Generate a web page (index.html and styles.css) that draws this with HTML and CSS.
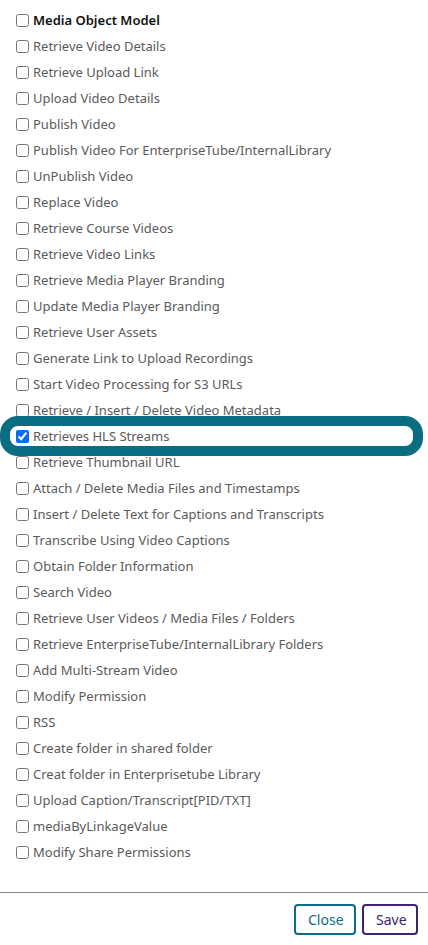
FILE: index.html
```html
<!DOCTYPE html>
<html lang="en">
<head>
    <meta charset="UTF-8">
    <meta name="viewport" content="width=device-width, initial-scale=1.0">
    <title>Media Object Model Permissions</title>
    <link rel="stylesheet" href="styles.css">
</head>
<body>
    <div class="perm-list">
        <label class="perm-row perm-head"><input type="checkbox"> Media Object Model</label>
        <label class="perm-row"><input type="checkbox"> Retrieve Video Details</label>
        <label class="perm-row"><input type="checkbox"> Retrieve Upload Link</label>
        <label class="perm-row"><input type="checkbox"> Upload Video Details</label>
        <label class="perm-row"><input type="checkbox"> Publish Video</label>
        <label class="perm-row"><input type="checkbox"> Publish Video For EnterpriseTube/InternalLibrary</label>
        <label class="perm-row"><input type="checkbox"> UnPublish Video</label>
        <label class="perm-row"><input type="checkbox"> Replace Video</label>
        <label class="perm-row"><input type="checkbox"> Retrieve Course Videos</label>
        <label class="perm-row"><input type="checkbox"> Retrieve Video Links</label>
        <label class="perm-row"><input type="checkbox"> Retrieve Media Player Branding</label>
        <label class="perm-row"><input type="checkbox"> Update Media Player Branding</label>
        <label class="perm-row"><input type="checkbox"> Retrieve User Assets</label>
        <label class="perm-row"><input type="checkbox"> Generate Link to Upload Recordings</label>
        <label class="perm-row"><input type="checkbox"> Start Video Processing for S3 URLs</label>
        <label class="perm-row"><input type="checkbox"> Retrieve / Insert / Delete Video Metadata</label>
        <label class="perm-row highlighted"><input type="checkbox" checked> Retrieves HLS Streams</label>
        <label class="perm-row"><input type="checkbox"> Retrieve Thumbnail URL</label>
        <label class="perm-row"><input type="checkbox"> Attach / Delete Media Files and Timestamps</label>
        <label class="perm-row"><input type="checkbox"> Insert / Delete Text for Captions and Transcripts</label>
        <label class="perm-row"><input type="checkbox"> Transcribe Using Video Captions</label>
        <label class="perm-row"><input type="checkbox"> Obtain Folder Information</label>
        <label class="perm-row"><input type="checkbox"> Search Video</label>
        <label class="perm-row"><input type="checkbox"> Retrieve User Videos / Media Files / Folders</label>
        <label class="perm-row"><input type="checkbox"> Retrieve EnterpriseTube/InternalLibrary Folders</label>
        <label class="perm-row"><input type="checkbox"> Add Multi-Stream Video</label>
        <label class="perm-row"><input type="checkbox"> Modify Permission</label>
        <label class="perm-row"><input type="checkbox"> RSS</label>
        <label class="perm-row"><input type="checkbox"> Create folder in shared folder</label>
        <label class="perm-row"><input type="checkbox"> Creat folder in Enterprisetube Library</label>
        <label class="perm-row"><input type="checkbox"> Upload Caption/Transcript[PID/TXT]</label>
        <label class="perm-row"><input type="checkbox"> mediaByLinkageValue</label>
        <label class="perm-row"><input type="checkbox"> Modify Share Permissions</label>
    </div>

    <!-- Footer buttons -->
    <div class="modal-footer">
        <button class="btn btn-close">Close</button>
        <button class="btn btn-save">Save</button>
    </div>
</body>
</html>
```

FILE: styles.css
```css
body {
    margin: 0;
    font-family: 'Noto Sans', sans-serif;
    background-color: #ffffff;
    color: #5a5a5a;
}
.perm-list {
    padding-top: 7px;
    height: 892px;
    box-sizing: border-box;
}
.perm-row {
    position: relative;
    display: flex;
    align-items: center;
    gap: 4px;
    height: 26px;
    padding-left: 16px;
    font-size: 13px;
    white-space: nowrap;
}
.perm-row input {
    width: 13px;
    height: 13px;
    margin: 0;
    accent-color: #0b6cf5;
}
.perm-head {
    color: #111;
    font-weight: 600;
}
.highlighted::before {
    content: "";
    position: absolute;
    left: 0;
    right: 5px;
    top: -7px;
    bottom: -7px;
    border: 10px solid #0b6d82;
    border-radius: 18px;
    pointer-events: none;
    z-index: 1;
}
.modal-footer {
    border-top: 1px solid #8a8a8a;
    display: flex;
    justify-content: flex-end;
    gap: 6px;
    padding: 11px 10px 0 0;
}
.btn {
    height: 31px;
    padding: 0 12px;
    background-color: #ffffff;
    border-radius: 4px;
    font-family: 'Noto Sans', sans-serif;
    font-size: 14px;
    cursor: pointer;
}
.btn-close {
    width: 62px;
    border: 2px solid #0b6d82;
    color: #0b6d82;
}
.btn-save {
    width: 56px;
    border: 2px solid #3b2470;
    color: #3b2470;
}
```
